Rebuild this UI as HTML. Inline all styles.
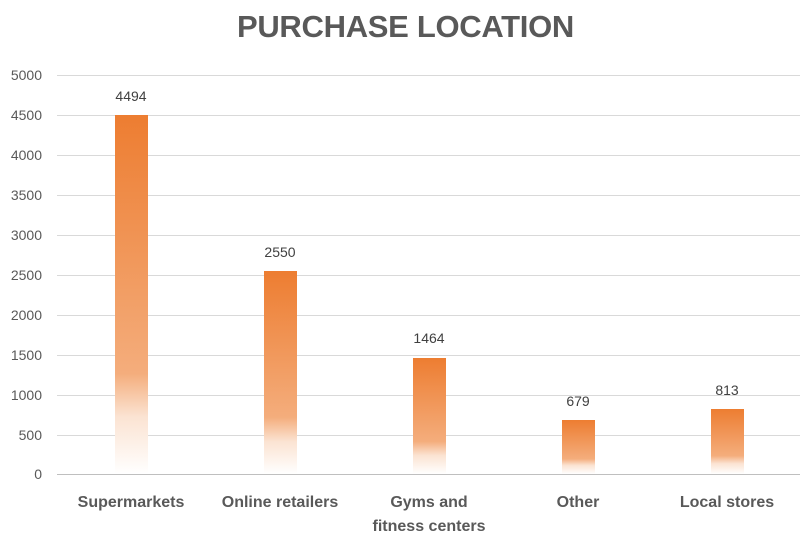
<!DOCTYPE html><html><head><style>
body{margin:0;width:811px;height:551px;background:#fff;position:relative;overflow:hidden;font-family:"Liberation Sans",sans-serif;color:#595959}
.t{position:absolute;top:9px;left:0;width:811px;text-align:center;font-size:31px;font-weight:bold;letter-spacing:-0.3px}
.g{position:absolute;left:57px;width:743px;height:1px;background:#d9d9d9}
.y{position:absolute;left:0;width:42px;text-align:right;font-size:14px;line-height:16px}
.b{position:absolute;width:33px;bottom:77px;background:linear-gradient(#ED7D31 0%,#F4AD7C 72%,#FBE3D2 84%,#fff 100%)}
.v{position:absolute;width:80px;text-align:center;font-size:14px;color:#404040}
.x{position:absolute;top:491px;width:150px;text-align:center;font-size:16px;font-weight:bold;line-height:24px}
</style></head><body>
<div class="t">PURCHASE LOCATION</div>
<div class="g" style="top:75px"></div><div class="g" style="top:115px"></div><div class="g" style="top:155px"></div><div class="g" style="top:195px"></div><div class="g" style="top:235px"></div><div class="g" style="top:275px"></div><div class="g" style="top:315px"></div><div class="g" style="top:355px"></div><div class="g" style="top:395px"></div><div class="g" style="top:435px"></div><div class="g" style="top:474px;background:#bfbfbf"></div>
<div class="y" style="top:67px">5000</div><div class="y" style="top:107px">4500</div><div class="y" style="top:147px">4000</div><div class="y" style="top:187px">3500</div><div class="y" style="top:227px">3000</div><div class="y" style="top:267px">2500</div><div class="y" style="top:307px">2000</div><div class="y" style="top:347px">1500</div><div class="y" style="top:387px">1000</div><div class="y" style="top:427px">500</div><div class="y" style="top:466px">0</div>
<div class="b" style="left:115px;top:115px"></div><div class="v" style="left:91px;top:88px">4494</div>
<div class="b" style="left:264px;top:271px"></div><div class="v" style="left:240px;top:244px">2550</div>
<div class="b" style="left:413px;top:358px"></div><div class="v" style="left:389px;top:330px">1464</div>
<div class="b" style="left:562px;top:420px"></div><div class="v" style="left:538px;top:393px">679</div>
<div class="b" style="left:711px;top:409px"></div><div class="v" style="left:687px;top:382px">813</div>
<div class="x" style="left:56px">Supermarkets</div>
<div class="x" style="left:205px">Online retailers</div>
<div class="x" style="left:354px">Gyms and<br>fitness centers</div>
<div class="x" style="left:503px">Other</div>
<div class="x" style="left:652px">Local stores</div>
</body></html>
